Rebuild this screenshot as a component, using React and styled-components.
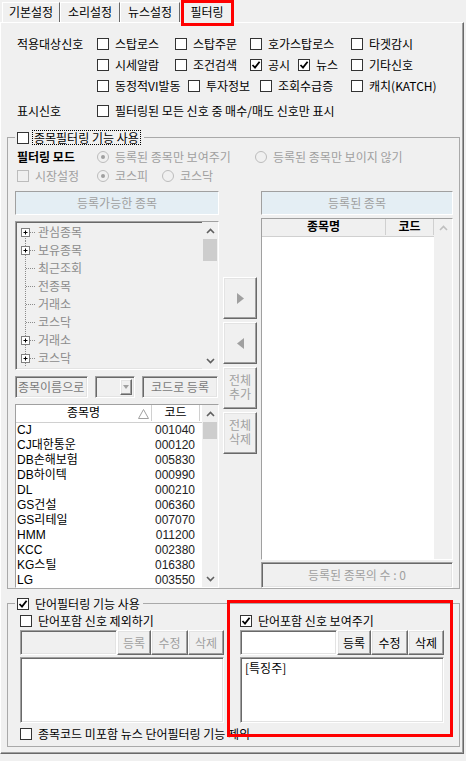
import React from 'react';
import styled, { createGlobalStyle, css } from 'styled-components';

const GlobalStyle = createGlobalStyle`
  html, body { margin: 0; padding: 0; background: #f0f0f0; }
  body {
    font-family: "Noto Sans CJK KR", "Noto Sans", sans-serif;
    font-size: 12px;
    color: #000;
  }
  * { box-sizing: border-box; }
`;

const sunken = css`
  border: 1px solid;
  border-color: #a0a0a0 #fff #fff #a0a0a0;
  box-shadow: inset 1px 1px 0 #696969, inset -1px -1px 0 #e3e3e3;
`;

const raised = css`
  border: 1px solid;
  border-color: #fff #696969 #696969 #fff;
  box-shadow: inset -1px -1px 0 #a0a0a0, inset 1px 1px 0 #e3e3e3;
`;

const compact = css`
  font-family: "Liberation Sans", "Noto Sans CJK KR", sans-serif;
  line-height: 14px;
`;

const Window = styled.div`
  width: 466px;
  height: 761px;
  overflow: hidden;
  line-height: 16px;
`;

/* tabs */
const TabBar = styled.div`
  display: flex;
  align-items: flex-end;
  height: 22px;
  padding-left: 2px;
  position: relative;
  z-index: 2;
`;

const Tab = styled.div`
  position: relative;
  width: ${p => p.$w}px;
  height: ${p => (p.$active ? 23 : 20)}px;
  margin-bottom: ${p => (p.$active ? -1 : 0)}px;
  margin-left: ${p => (p.$active ? 2 : 0)}px;
  border: 1px solid;
  border-bottom: none;
  border-color: #fff #696969 #fff #fff;
  background: #f0f0f0;
  display: flex;
  align-items: center;
  justify-content: center;
  padding-bottom: 1px;
  white-space: nowrap;
`;

const RedMark = styled.div`
  position: absolute;
  inset: ${p => p.$inset};
  border: 3px solid #f00;
  pointer-events: none;
  z-index: 5;
`;

const Panel = styled.div`
  width: 464px;
  height: 732px;
  border: 1px solid;
  border-color: #fff #696969 #696969 #fff;
  box-shadow: inset -1px -1px 0 #a0a0a0;
`;

/* signal rows */
const Signals = styled.div`
  padding: 10px 0 0 16px;
`;

const Row = styled.div`
  display: flex;
  align-items: center;
  height: ${p => p.$h || 21}px;
  margin-top: ${p => p.$mt || 0}px;
  padding-left: ${p => p.$pl || 0}px;
  white-space: nowrap;
`;

const Label = styled.div`
  width: ${p => p.$w || 80}px;
  flex: none;
  font-weight: ${p => (p.$bold ? 700 : 400)};
`;

const CheckWrap = styled.div`
  display: flex;
  align-items: center;
  gap: 6px;
  width: ${p => (p.$w ? `${p.$w}px` : 'auto')};
  flex: none;
  color: ${p => (p.$disabled ? '#a0a0a0' : '#000')};
  white-space: nowrap;
`;

const Box = styled.span`
  width: 12px;
  height: 12px;
  flex: none;
  display: flex;
  align-items: center;
  justify-content: center;
  border: 1px solid ${p => (p.$disabled ? '#bcbcbc' : '#333')};
  background: ${p => (p.$disabled ? '#f0f0f0' : '#fff')};
`;

const Focus = styled.span`
  outline: 1px dotted #000;
  outline-offset: -1px;
  padding: 0 2px;
  margin-left: -3px;
`;

const Check = ({ checked, disabled, focus, w, children }) => (
  <CheckWrap $w={w} $disabled={disabled}>
    <Box $disabled={disabled}>
      {checked && (
        <svg width="10" height="10" viewBox="0 0 10 10">
          <path d="M1.5 5 L4 7.6 L8.6 1.8" fill="none" stroke="#000" strokeWidth="1.8" />
        </svg>
      )}
    </Box>
    {focus ? <Focus>{children}</Focus> : <span>{children}</span>}
  </CheckWrap>
);

const Dot = styled.span`
  width: 12px;
  height: 12px;
  flex: none;
  border-radius: 50%;
  border: 1px solid #bcbcbc;
  background: #f0f0f0;
  display: flex;
  align-items: center;
  justify-content: center;
  &::after {
    content: '';
    width: 4px;
    height: 4px;
    border-radius: 50%;
    background: ${p => (p.$on ? '#a0a0a0' : 'transparent')};
  }
`;

const Radio = ({ checked, w, children }) => (
  <CheckWrap $w={w} $disabled>
    <Dot $on={checked} />
    <span>{children}</span>
  </CheckWrap>
);

/* group boxes */
const Group = styled.fieldset`
  margin: ${p => p.$mt}px 0 0 6px;
  width: 453px;
  min-width: 0;
  padding: ${p => p.$pad};
  border: 1px solid #a9a9a9;
`;

const Legend = styled.legend`
  padding: 0 3px 0 2px;
  height: 15px;
  line-height: 15px;
  display: flex;
  align-items: center;
`;

/* stock filter */
const Columns = styled.div`
  display: flex;
  gap: 4px;
  margin-top: 6px;
`;

const Col = styled.div`
  width: ${p => p.$w}px;
  flex: none;
  display: flex;
  flex-direction: column;
  gap: ${p => p.$gap || 0}px;
  padding-top: ${p => p.$pt || 0}px;
`;

const Caption = styled.div`
  height: 24px;
  background: #e4eef4;
  border: 1px solid;
  border-color: #a0a0a0 #fff #fff #a0a0a0;
  color: #a0a0a0;
  display: flex;
  align-items: center;
  justify-content: center;
`;

const Sunken = styled.div`
  ${sunken};
  height: ${p => p.$h}px;
  margin-top: ${p => p.$mt || 0}px;
  background: ${p => p.$bg || '#f0f0f0'};
  display: flex;
  overflow: hidden;
`;

const TreeList = styled.div`
  flex: 1;
  padding: 1px 0 0 1px;
`;

const TreeRow = styled.div`
  display: flex;
  align-items: center;
  height: 18px;
  color: #8c8c8c;
  gap: 1px;
`;

const TreeNode = ({ label, plus, first }) => (
  <TreeRow>
    <svg width="20" height="18" viewBox="0 0 20 18">
      <line x1="8.5" y1={first ? 9 : 0} x2="8.5" y2="18" stroke="#8c8c8c" strokeDasharray="1 1" />
      <line x1="9" y1="9.5" x2="19" y2="9.5" stroke="#8c8c8c" strokeDasharray="1 1" />
      {plus && (
        <>
          <rect x="4.5" y="5.5" width="8" height="8" fill="#fff" stroke="#808080" />
          <path d="M6.5 9.5 H10.5 M8.5 7.5 V11.5" stroke="#000" />
        </>
      )}
    </svg>
    <span>{label}</span>
  </TreeRow>
);

const Track = styled.div`
  width: ${p => p.$w || 16}px;
  flex: none;
  display: flex;
  flex-direction: column;
  background: #f0f0f0;
`;

const Arrow = styled.div`
  height: 17px;
  flex: none;
  display: flex;
  align-items: center;
  justify-content: center;
`;

const Thumb = styled.div`
  height: ${p => p.$h}px;
  margin: 0 1px;
  background: #cdcdcd;
`;

const Chevron = ({ down, light }) => (
  <svg width="9" height="6" viewBox="0 0 9 6">
    <polyline
      points={down ? '1,1 4.5,4.5 8,1' : '1,5 4.5,1.5 8,5'}
      fill="none"
      stroke={light ? '#bfbfbf' : '#606060'}
      strokeWidth="1.6"
    />
  </svg>
);

const Scroll = ({ thumb, w, light, noDown }) => (
  <Track $w={w}>
    <Arrow>
      <Chevron light={light} />
    </Arrow>
    {thumb && <Thumb $h={thumb} />}
    <div style={{ flex: 1 }} />
    {!noDown && (
      <Arrow>
        <Chevron down />
      </Arrow>
    )}
  </Track>
);

const InputRow = styled.div`
  display: flex;
  height: 22px;
  margin-top: 6px;
  gap: 7px;
`;

const Field = styled.div`
  ${sunken};
  width: ${p => p.$w}px;
  flex: none;
  color: #7a7a7a;
  white-space: nowrap;
  overflow: hidden;
  display: flex;
  align-items: center;
  justify-content: ${p => (p.$center ? 'center' : 'flex-start')};
  padding: 0 2px;
`;

const DropBtn = styled.div`
  ${raised};
  margin-left: auto;
  width: 12px;
  height: 16px;
  display: flex;
  align-items: center;
  justify-content: center;
  &::after {
    content: '';
    border: 3px solid transparent;
    border-top: 4px solid #a0a0a0;
    margin-top: 3px;
  }
`;

const Table = styled.div`
  ${compact};
  flex: 1;
  display: flex;
  flex-direction: column;
  background: #fff;
`;

const Head = styled.div`
  display: flex;
  height: 18px;
  flex: none;
  background: ${p => p.$bg || '#fff'};
  border-bottom: 1px solid #d0d0d0;
  padding-bottom: 1px;
`;

const HeadCell = styled.div`
  width: ${p => (p.$w ? `${p.$w}px` : 'auto')};
  flex: ${p => (p.$w ? 'none' : 1)};
  position: relative;
  display: flex;
  align-items: center;
  justify-content: center;
  border-right: 1px solid #d0d0d0;
  font-weight: ${p => (p.$bold ? 700 : 400)};
`;

const Sort = styled.svg`
  position: absolute;
  right: 2px;
  top: 4px;
`;

const StockRow = styled.div`
  display: flex;
  height: 15px;
  align-items: center;
  white-space: nowrap;
`;

const Name = styled.div`
  width: 135px;
  padding-left: 1px;
`;

const Code = styled.div`
  width: 48px;
  text-align: right;
  padding-right: 4px;
  color: #222;
`;

const MoveBtn = styled.div`
  ${raised};
  ${compact};
  height: 42px;
  display: flex;
  align-items: center;
  justify-content: center;
  text-align: center;
  color: #a0a0a0;
  background: #f0f0f0;
`;

const Count = styled.div`
  ${sunken};
  height: 26px;
  margin-top: 2px;
  color: #a0a0a0;
  display: flex;
  align-items: center;
  justify-content: center;
`;

/* word filter */
const WordGrid = styled.div`
  display: grid;
  grid-template-columns: 204px 204px;
  column-gap: 16px;
  padding-left: 5px;
`;

const WordCol = styled.div`
  position: relative;
  display: flex;
  flex-direction: column;
`;

const EditRow = styled.div`
  display: flex;
  height: 25px;
`;

const Edit = styled.div`
  ${sunken};
  flex: 1;
  background: ${p => (p.$off ? '#f0f0f0' : '#fff')};
`;

const Btn = styled.div`
  ${raised};
  width: ${p => p.$w}px;
  flex: none;
  display: flex;
  align-items: center;
  justify-content: center;
  color: ${p => (p.$off ? '#a0a0a0' : '#000')};
  background: #f0f0f0;
`;

const Memo = styled.div`
  ${sunken};
  height: 66px;
  margin-top: 2px;
  background: #fff;
  padding: 2px 4px;
`;

const stocks = [
  ['CJ', '001040'],
  ['CJ대한통운', '000120'],
  ['DB손해보험', '005830'],
  ['DB하이텍', '000990'],
  ['DL', '000210'],
  ['GS건설', '006360'],
  ['GS리테일', '007070'],
  ['HMM', '011200'],
  ['KCC', '002380'],
  ['KG스틸', '016380'],
  ['LG', '003550'],
];

const tree = [
  ['관심종목', true],
  ['보유종목', true],
  ['최근조회', false],
  ['전종목', false],
  ['거래소', false],
  ['코스닥', false],
  ['거래소', true],
  ['코스닥', true],
];

const Triangle = ({ left }) => (
  <svg width="7" height="11" viewBox="0 0 7 11">
    <polygon points={left ? '7,0 0,5.5 7,11' : '0,0 7,5.5 0,11'} fill="#a0a0a0" />
  </svg>
);

const WordPanel = ({ title, checked, off, words }) => (
  <>
    <Row $h={19}>
      <Check checked={checked}>{title}</Check>
    </Row>
    <EditRow>
      <Edit $off={off} />
      <Btn $w={34} $off={off}>등록</Btn>
      <Btn $w={37} $off={off}>수정</Btn>
      <Btn $w={36} $off={off}>삭제</Btn>
    </EditRow>
    <Memo>{words}</Memo>
  </>
);

export default function App() {
  return (
    <Window>
      <GlobalStyle />
      <TabBar>
        <Tab $w={58}>기본설정</Tab>
        <Tab $w={60}>소리설정</Tab>
        <Tab $w={60}>뉴스설정</Tab>
        <Tab $w={50} $active>
          필터링
          <RedMark $inset="-1px -3px -3px -2px" />
        </Tab>
      </TabBar>
      <Panel>
        <Signals>
          <Row>
            <Label>적용대상신호</Label>
            <Check w={78}>스탑로스</Check>
            <Check w={75}>스탑주문</Check>
            <Check w={101}>호가스탑로스</Check>
            <Check>타겟감시</Check>
          </Row>
          <Row>
            <Label />
            <Check w={78}>시세알람</Check>
            <Check w={75}>조건검색</Check>
            <Check w={48} checked>공시</Check>
            <Check w={53} checked>뉴스</Check>
            <Check>기타신호</Check>
          </Row>
          <Row>
            <Label />
            <Check w={91}>동정적VI발동</Check>
            <Check w={72}>투자정보</Check>
            <Check w={91}>조회수급증</Check>
            <Check>캐치(KATCH)</Check>
          </Row>
          <Row $mt={4}>
            <Label>표시신호</Label>
            <Check>필터링된 모든 신호 중 매수/매도 신호만 표시</Check>
          </Row>
        </Signals>

        <Group $mt={9} $pad="2px 5px 0 7px">
          <Legend>
            <Check focus>종목필터링 기능 사용</Check>
          </Legend>
          <Row $h={19} $pl={2}>
            <Label $bold>필터링 모드</Label>
            <Radio w={158} checked>등록된 종목만 보여주기</Radio>
            <Radio>등록된 종목만 보이지 않기</Radio>
          </Row>
          <Row $h={19} $pl={2}>
            <Check w={80} disabled>시장설정</Check>
            <Radio w={65} checked>코스피</Radio>
            <Radio>코스닥</Radio>
          </Row>
          <Columns>
            <Col $w={204}>
              <Caption>등록가능한 종목</Caption>
              <Sunken $h={149} $mt={6}>
                <TreeList>
                  {tree.map(([label, plus], i) => (
                    <TreeNode key={i} label={label} plus={plus} first={i === 0} />
                  ))}
                </TreeList>
                <Scroll thumb={22} />
              </Sunken>
              <InputRow>
                <Field $w={73}>종목이름으로</Field>
                <Field $w={40}>
                  <DropBtn />
                </Field>
                <Field $w={76} $center>코드로 등록</Field>
              </InputRow>
              <Sunken $h={184} $mt={6} $bg="#fff">
                <Table>
                  <Head>
                    <HeadCell $w={136}>
                      종목명
                      <Sort width="11" height="10" viewBox="0 0 11 10">
                        <polygon points="5.5,0.5 10.5,9.5 0.5,9.5" fill="none" stroke="#a0a0a0" />
                      </Sort>
                    </HeadCell>
                    <HeadCell $w={48}>코드</HeadCell>
                  </Head>
                  {stocks.map(([n, c]) => (
                    <StockRow key={c}>
                      <Name>{n}</Name>
                      <Code>{c}</Code>
                    </StockRow>
                  ))}
                </Table>
                <Scroll thumb={17} />
              </Sunken>
            </Col>

            <Col $w={34} $pt={86} $gap={3}>
              <MoveBtn>
                <Triangle />
              </MoveBtn>
              <MoveBtn>
                <Triangle left />
              </MoveBtn>
              <MoveBtn>전체<br />추가</MoveBtn>
              <MoveBtn>전체<br />삭제</MoveBtn>
            </Col>

            <Col $w={192}>
              <Caption>등록된 종목</Caption>
              <Sunken $h={342} $mt={3} $bg="#fff">
                <Table>
                  <Head $bg="#f0f0f0">
                    <HeadCell $w={124} $bold>종목명</HeadCell>
                    <HeadCell $bold>코드</HeadCell>
                  </Head>
                </Table>
                <Scroll w={18} light noDown />
              </Sunken>
              <Count>등록된 종목의 수 : 0</Count>
            </Col>
          </Columns>
        </Group>

        <Group $mt={7} $pad="0 5px 3px 7px">
          <Legend>
            <Check checked>단어필터링 기능 사용</Check>
          </Legend>
          <WordGrid>
            <WordCol>
              <WordPanel title="단어포함 신호 제외하기" off />
            </WordCol>
            <WordCol>
              <WordPanel title="단어포함 신호 보여주기" checked words="[특징주]" />
              <RedMark $inset="-11px -9px -14px -13px" />
            </WordCol>
          </WordGrid>
          <Row $h={18} $mt={2} $pl={5}>
            <Check>종목코드 미포함 뉴스 단어필터링 기능 제외</Check>
          </Row>
        </Group>
      </Panel>
    </Window>
  );
}
